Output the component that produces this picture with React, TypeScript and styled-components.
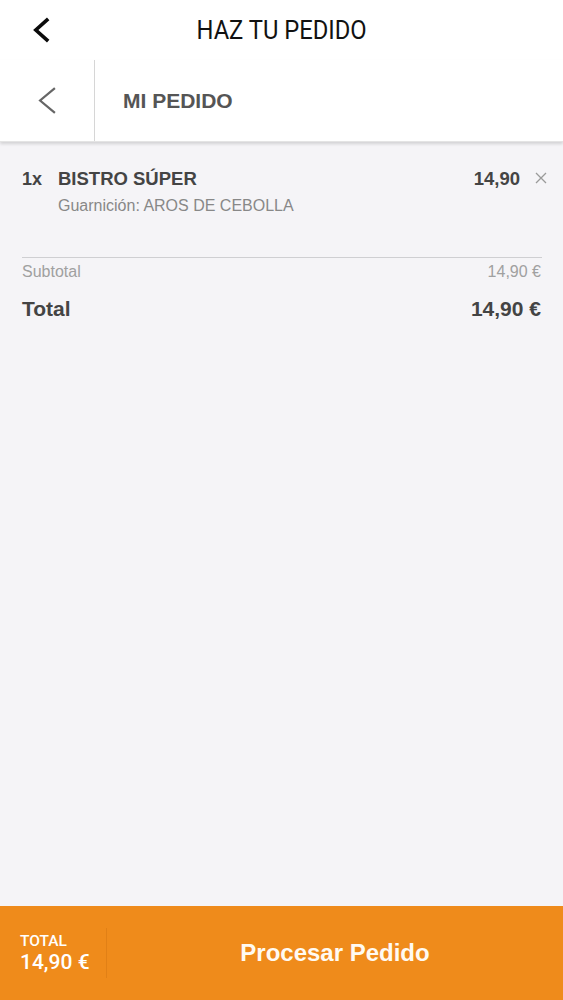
import styled, { createGlobalStyle } from 'styled-components';

const GlobalStyle = createGlobalStyle`
  html, body {
    margin: 0;
    padding: 0;
    background: #f5f4f7;
  }
  body {
    font-family: "Liberation Sans", Arial, sans-serif;
  }
`;

const Page = styled.div`
  min-height: 100vh;
  display: flex;
  flex-direction: column;
`;

const TopBar = styled.header`
  height: 60px;
  background: #fff;
  display: flex;
  align-items: center;
`;

const TopBack = styled.div`
  width: 80px;
  height: 60px;
  display: flex;
  align-items: center;
`;

const TopTitle = styled.h1`
  flex: 1;
  margin: 0 80px 0 0;
  text-align: center;
  font-family: Roboto, "Liberation Sans", sans-serif;
  font-weight: 400;
  font-size: 25px;
  color: #111;
  span {
    display: inline-block;
    transform: scaleX(0.95);
  }
`;

const SubHeader = styled.div`
  height: 81px;
  background: #fff;
  display: flex;
  box-shadow: 0 2px 3px rgba(0, 0, 0, 0.14);
  border-bottom: 1px solid #e4e4e4;
  position: relative;
  z-index: 1;
`;

const SubBack = styled.div`
  width: 94px;
  border-right: 1px solid #d6d6d6;
  display: flex;
  align-items: center;
`;

const SubTitle = styled.div`
  padding-left: 28px;
  display: flex;
  align-items: center;
  font-size: 21px;
  font-weight: 700;
  color: #555;
`;

const Content = styled.main`
  flex: 1;
  padding: 26px 21px 0 22px;
`;

const ItemRow = styled.div`
  display: flex;
  align-items: flex-start;
  margin-right: -5px;
`;

const Qty = styled.div`
  width: 36px;
  font-size: 18px;
  font-weight: 700;
  color: #444;
  line-height: 22px;
`;

const ItemBody = styled.div`
  flex: 1;
`;

const ItemName = styled.div`
  font-size: 18.5px;
  font-weight: 700;
  color: #444;
  line-height: 22px;
`;

const ItemOption = styled.div`
  margin-top: 6px;
  font-size: 16px;
  color: #888;
  line-height: 20px;
`;

const ItemPrice = styled.div`
  font-size: 18.5px;
  font-weight: 700;
  color: #444;
  line-height: 22px;
`;

const Remove = styled.button`
  border: 0;
  background: none;
  padding: 0;
  margin: 4px 0 0 15px;
  width: 12px;
  height: 12px;
  display: flex;
`;

const Divider = styled.hr`
  border: 0;
  border-top: 1px solid #cfcfd2;
  margin: 41px 0 0;
`;

const SumRow = styled.div<{ $big?: boolean }>`
  display: flex;
  justify-content: space-between;
  align-items: center;
  font-size: ${(p) => (p.$big ? '21px' : '16px')};
  font-weight: ${(p) => (p.$big ? 700 : 400)};
  color: ${(p) => (p.$big ? '#444' : '#a0a0a0')};
  margin-top: ${(p) => (p.$big ? '16px' : '5px')};
  padding-right: 1px;
`;

const Footer = styled.footer`
  height: 94px;
  background: #ef8b1b;
  display: flex;
  align-items: center;
  color: #fff;
`;

const FooterTotal = styled.div`
  width: 86px;
  padding-left: 20px;
  font-family: Roboto, "Liberation Sans", sans-serif;
  font-weight: 500;
  border-right: 1px solid rgba(160, 80, 0, 0.18);
  height: 50px;
  display: flex;
  flex-direction: column;
  justify-content: center;
`;

const FooterLabel = styled.div`
  font-size: 15.5px;
  line-height: 17px;
`;

const FooterAmount = styled.div`
  font-size: 21px;
  line-height: 24px;
`;

const ProcessButton = styled.button`
  flex: 1;
  height: 100%;
  border: 0;
  background: none;
  color: #fffaf2;
  font-family: "Liberation Sans", Arial, sans-serif;
  font-weight: 700;
  font-size: 24px;
  padding: 0;
`;

const Chevron = ({ left, w, h, stroke, color }: { left: number; w: number; h: number; stroke: number; color: string }) => (
  <svg width={w + left} height={h} viewBox={`0 0 ${w + left} ${h}`}>
    <polyline
      points={`${left + w - stroke / 2},${stroke / 2} ${left + stroke / 2},${h / 2} ${left + w - stroke / 2},${h - stroke / 2}`}
      fill="none"
      stroke={color}
      strokeWidth={stroke}
    />
  </svg>
);

export default function App() {
  return (
    <Page>
      <GlobalStyle />
      <TopBar>
        <TopBack>
          <Chevron left={34} w={16} h={26} stroke={3.6} color="#0b0b0b" />
        </TopBack>
        <TopTitle>
          <span>HAZ TU PEDIDO</span>
        </TopTitle>
      </TopBar>
      <SubHeader>
        <SubBack>
          <Chevron left={39} w={17} h={27} stroke={2.2} color="#666" />
        </SubBack>
        <SubTitle>MI PEDIDO</SubTitle>
      </SubHeader>
      <Content>
        <ItemRow>
          <Qty>1x</Qty>
          <ItemBody>
            <ItemName>BISTRO SÚPER</ItemName>
            <ItemOption>Guarnición: AROS DE CEBOLLA</ItemOption>
          </ItemBody>
          <ItemPrice>14,90</ItemPrice>
          <Remove aria-label="Quitar">
            <svg width="12" height="12" viewBox="0 0 12 12">
              <path d="M1 1L11 11M11 1L1 11" stroke="#9a9a9a" strokeWidth="1.3" />
            </svg>
          </Remove>
        </ItemRow>
        <Divider />
        <SumRow>
          <span>Subtotal</span>
          <span>14,90 €</span>
        </SumRow>
        <SumRow $big>
          <span>Total</span>
          <span>14,90 €</span>
        </SumRow>
      </Content>
      <Footer>
        <FooterTotal>
          <FooterLabel>TOTAL</FooterLabel>
          <FooterAmount>14,90 €</FooterAmount>
        </FooterTotal>
        <ProcessButton>Procesar Pedido</ProcessButton>
      </Footer>
    </Page>
  );
}
